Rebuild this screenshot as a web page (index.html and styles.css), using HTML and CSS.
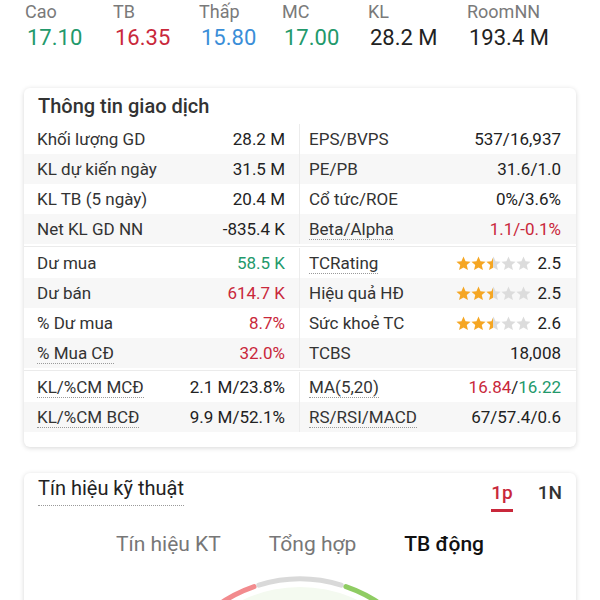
FILE: index.html
```html
<!DOCTYPE html>
<html lang="vi">
<head>
<meta charset="utf-8">
<title>Thông tin giao dịch</title>
<link rel="stylesheet" href="styles.css">
</head>
<body>
<svg class="defs" width="0" height="0" aria-hidden="true">
  <defs>
    <symbol id="star" viewBox="1 1 22 22"><path d="M12 1.8l3 7 7.4.6-5.6 4.9 1.7 7.3L12 17.7l-6.5 3.9 1.7-7.3-5.6-4.9 7.4-.6z"/></symbol>
    <linearGradient id="half" x1="0" x2="1" y1="0" y2="0">
      <stop offset="50%" stop-color="#f5a623"/>
      <stop offset="50%" stop-color="#dcdcdc"/>
    </linearGradient>
  </defs>
</svg>

<div class="stats">
  <div class="stat"><div class="stat-label">Cao</div><div class="stat-value green">17.10</div></div>
  <div class="stat"><div class="stat-label">TB</div><div class="stat-value red">16.35</div></div>
  <div class="stat"><div class="stat-label">Thấp</div><div class="stat-value blue">15.80</div></div>
  <div class="stat"><div class="stat-label">MC</div><div class="stat-value green">17.00</div></div>
  <div class="stat"><div class="stat-label">KL</div><div class="stat-value">28.2 M</div></div>
  <div class="stat"><div class="stat-label">RoomNN</div><div class="stat-value">193.4 M</div></div>
</div>

<section class="card info">
  <h2 class="card-title">Thông tin giao dịch</h2>
  <div class="group">
    <div class="row">
      <div class="cell"><span class="label">Khối lượng GD</span><span class="value">28.2 M</span></div>
      <div class="cell"><span class="label">EPS/BVPS</span><span class="value">537/16,937</span></div>
    </div>
    <div class="row">
      <div class="cell"><span class="label">KL dự kiến ngày</span><span class="value">31.5 M</span></div>
      <div class="cell"><span class="label">PE/PB</span><span class="value">31.6/1.0</span></div>
    </div>
    <div class="row">
      <div class="cell"><span class="label">KL TB (5 ngày)</span><span class="value">20.4 M</span></div>
      <div class="cell"><span class="label">Cổ tức/ROE</span><span class="value">0%/3.6%</span></div>
    </div>
    <div class="row">
      <div class="cell"><span class="label">Net KL GD NN</span><span class="value">-835.4 K</span></div>
      <div class="cell"><span class="label dotted">Beta/Alpha</span><span class="value up-red">1.1/-0.1%</span></div>
    </div>
  </div>
  <div class="group">
    <div class="row">
      <div class="cell"><span class="label">Dư mua</span><span class="value up-green">58.5 K</span></div>
      <div class="cell"><span class="label dotted">TCRating</span>
        <span class="rating">
          <svg class="stars" viewBox="0 0 75 15"><use href="#star" x="0" width="15" height="15" fill="#f5a623"/><use href="#star" x="15" width="15" height="15" fill="#f5a623"/><use href="#star" x="30" width="15" height="15" fill="url(#half)"/><use href="#star" x="45" width="15" height="15" fill="#dcdcdc"/><use href="#star" x="60" width="15" height="15" fill="#dcdcdc"/></svg>
          <span class="value">2.5</span>
        </span>
      </div>
    </div>
    <div class="row">
      <div class="cell"><span class="label">Dư bán</span><span class="value up-red">614.7 K</span></div>
      <div class="cell"><span class="label">Hiệu quả HĐ</span>
        <span class="rating">
          <svg class="stars" viewBox="0 0 75 15"><use href="#star" x="0" width="15" height="15" fill="#f5a623"/><use href="#star" x="15" width="15" height="15" fill="#f5a623"/><use href="#star" x="30" width="15" height="15" fill="url(#half)"/><use href="#star" x="45" width="15" height="15" fill="#dcdcdc"/><use href="#star" x="60" width="15" height="15" fill="#dcdcdc"/></svg>
          <span class="value">2.5</span>
        </span>
      </div>
    </div>
    <div class="row">
      <div class="cell"><span class="label">% Dư mua</span><span class="value up-red">8.7%</span></div>
      <div class="cell"><span class="label">Sức khoẻ TC</span>
        <span class="rating">
          <svg class="stars" viewBox="0 0 75 15"><use href="#star" x="0" width="15" height="15" fill="#f5a623"/><use href="#star" x="15" width="15" height="15" fill="#f5a623"/><use href="#star" x="30" width="15" height="15" fill="url(#half)"/><use href="#star" x="45" width="15" height="15" fill="#dcdcdc"/><use href="#star" x="60" width="15" height="15" fill="#dcdcdc"/></svg>
          <span class="value">2.6</span>
        </span>
      </div>
    </div>
    <div class="row">
      <div class="cell"><span class="label dotted">% Mua CĐ</span><span class="value up-red">32.0%</span></div>
      <div class="cell"><span class="label">TCBS</span><span class="value">18,008</span></div>
    </div>
  </div>
  <div class="group">
    <div class="row">
      <div class="cell"><span class="label dotted">KL/%CM MCĐ</span><span class="value">2.1 M/23.8%</span></div>
      <div class="cell"><span class="label dotted">MA(5,20)</span><span class="value"><span class="up-red">16.84</span>/<span class="up-green">16.22</span></span></div>
    </div>
    <div class="row">
      <div class="cell"><span class="label dotted">KL/%CM BCĐ</span><span class="value">9.9 M/52.1%</span></div>
      <div class="cell"><span class="label dotted">RS/RSI/MACD</span><span class="value">67/57.4/0.6</span></div>
    </div>
  </div>
</section>

<section class="card signals">
  <div class="signals-head">
    <h2 class="signals-title">Tín hiệu kỹ thuật</h2>
    <div class="periods">
      <span class="period active">1p</span>
      <span class="period">1N</span>
    </div>
  </div>
  <div class="tabs">
    <span class="tab">Tín hiệu KT</span>
    <span class="tab">Tổng hợp</span>
    <span class="tab active">TB động</span>
  </div>
  <div class="gauge">
    <svg width="300" height="160" viewBox="0 0 300 160">
      <circle cx="150" cy="146" r="133" fill="#f4faf0"/>
      <g fill="none" stroke-width="5" stroke-linecap="round">
        <path d="M9.02 143.54 A141 141 0 0 1 34.50 65.13" stroke="#e04b55"/>
        <path d="M37.39 61.14 A141 141 0 0 1 104.09 12.68" stroke="#f28b8e"/>
        <path d="M108.78 11.16 A141 141 0 0 1 191.22 11.16" stroke="#d9d9d9"/>
        <path d="M195.91 12.68 A141 141 0 0 1 262.61 61.14" stroke="#8fcc63"/>
        <path d="M265.50 65.13 A141 141 0 0 1 290.98 143.54" stroke="#3aa66a"/>
      </g>
    </svg>
  </div>
</section>
</body>
</html>
```

FILE: styles.css
```css
* { box-sizing: border-box; }

body {
  margin: 0;
  background: #ffffff;
  font-family: Roboto, "Noto Sans", "Liberation Sans", sans-serif;
  color: #222;
}

.defs { position: absolute; width: 0; height: 0; overflow: hidden; }

/* top stats */
.stats {
  display: grid;
  grid-template-columns: 88px 86px 83px 86px 99px auto;
  padding-left: 25px;
}
.stat-label {
  font-size: 18px;
  line-height: 24px;
  color: #7a7a7a;
}
.stat-value {
  margin-top: 1px;
  font-size: 22px;
  line-height: 26px;
  padding-left: 2px;
  color: #222;
}
.stat-value.green { color: #22996b; }
.stat-value.red { color: #c9283b; }
.stat-value.blue { color: #3a8ed8; }

/* cards */
.card {
  margin: 0 24px;
  background: #fff;
  border-radius: 6px;
  box-shadow: 0 1px 5px rgba(0, 0, 0, 0.16);
}

.info {
  margin-top: 37px;
  padding-bottom: 15px;
}

.card-title {
  margin: 0;
  padding-left: 14px;
  font-size: 20px;
  font-weight: 500;
  line-height: 36px;
  color: #333;
}

.group + .group {
  margin-top: 2px;
  padding-top: 1px;
  border-top: 1px solid #ebebeb;
}

.row {
  display: grid;
  grid-template-columns: 1fr 1fr;
  height: 30px;
}
.row:nth-child(even) { background: #f7f7f7; }

.cell {
  display: flex;
  align-items: center;
  justify-content: space-between;
  font-size: 17px;
  line-height: 30px;
  white-space: nowrap;
}
.cell:first-child {
  padding: 0 14px 0 13px;
  border-right: 1px solid #ececec;
}
.cell:last-child {
  padding: 0 15px 0 9px;
}

.label { color: #333; line-height: 20px; }
.value { color: #222; line-height: 20px; }
.up-red { color: #c9283b; }
.up-green { color: #22996b; }

.dotted { border-bottom: 1px dotted #9a9a9a; }

.rating {
  display: flex;
  align-items: center;
  gap: 6px;
}
.stars {
  width: 75px;
  height: 15px;
  display: block;
}

/* signals */
.signals {
  margin-top: 26px;
  height: 200px;
  overflow: hidden;
}
.signals-head {
  display: flex;
  justify-content: space-between;
  align-items: flex-start;
  padding: 3px 14px 0 14px;
}
.signals-title {
  margin: 0;
  font-size: 20px;
  font-weight: 400;
  line-height: 24px;
  color: #222;
  padding-bottom: 5px;
  border-bottom: 1px dotted #9a9a9a;
}
.periods {
  display: flex;
  gap: 25px;
  padding-top: 5px;
}
.period {
  font-size: 19px;
  font-weight: 500;
  line-height: 24px;
  color: #333;
  padding-bottom: 4px;
  border-bottom: 3px solid transparent;
}
.period.active {
  color: #c9283b;
  border-bottom-color: #c9283b;
}

.tabs {
  display: flex;
  justify-content: center;
  gap: 48px;
  margin-top: 18px;
}
.tab {
  font-size: 21px;
  line-height: 28px;
  color: #777;
}
.tab.active {
  color: #111;
  font-weight: 500;
}

.gauge {
  display: flex;
  justify-content: center;
  margin-top: 16px;
}
.gauge svg { display: block; }
```
